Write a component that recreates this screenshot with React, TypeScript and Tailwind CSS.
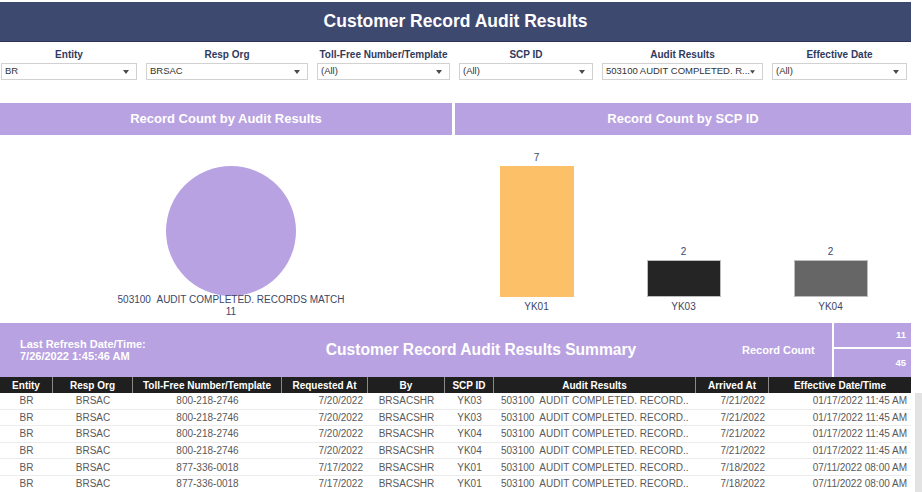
import React from 'react';

interface Filter {
  label: string;
  value: string;
  width: string;
}

interface Row {
  entity: string;
  respOrg: string;
  number: string;
  requestedAt: string;
  by: string;
  scpId: string;
  result: string;
  arrivedAt: string;
  effective: string;
}

const filters: Filter[] = [
  { label: 'Entity', value: 'BR', width: 'w-[136px]' },
  { label: 'Resp Org', value: 'BRSAC', width: 'w-[162px]' },
  { label: 'Toll-Free Number/Template', value: '(All)', width: 'w-[133px]' },
  { label: 'SCP ID', value: '(All)', width: 'w-[134px]' },
  { label: 'Audit Results', value: '503100 AUDIT COMPLETED. R...', width: 'w-[161px]' },
  { label: 'Effective Date', value: '(All)', width: 'w-[135px]' },
];

const rows: Row[] = [
  { entity: 'BR', respOrg: 'BRSAC', number: '800-218-2746', requestedAt: '7/20/2022', by: 'BRSACSHR', scpId: 'YK03', result: '503100  AUDIT COMPLETED. RECORD..', arrivedAt: '7/21/2022', effective: '01/17/2022 11:45 AM' },
  { entity: 'BR', respOrg: 'BRSAC', number: '800-218-2746', requestedAt: '7/20/2022', by: 'BRSACSHR', scpId: 'YK03', result: '503100  AUDIT COMPLETED. RECORD..', arrivedAt: '7/21/2022', effective: '01/17/2022 11:45 AM' },
  { entity: 'BR', respOrg: 'BRSAC', number: '800-218-2746', requestedAt: '7/20/2022', by: 'BRSACSHR', scpId: 'YK04', result: '503100  AUDIT COMPLETED. RECORD..', arrivedAt: '7/21/2022', effective: '01/17/2022 11:45 AM' },
  { entity: 'BR', respOrg: 'BRSAC', number: '800-218-2746', requestedAt: '7/20/2022', by: 'BRSACSHR', scpId: 'YK04', result: '503100  AUDIT COMPLETED. RECORD..', arrivedAt: '7/21/2022', effective: '01/17/2022 11:45 AM' },
  { entity: 'BR', respOrg: 'BRSAC', number: '877-336-0018', requestedAt: '7/17/2022', by: 'BRSACSHR', scpId: 'YK01', result: '503100  AUDIT COMPLETED. RECORD..', arrivedAt: '7/18/2022', effective: '07/11/2022 08:00 AM' },
  { entity: 'BR', respOrg: 'BRSAC', number: '877-336-0018', requestedAt: '7/17/2022', by: 'BRSACSHR', scpId: 'YK01', result: '503100  AUDIT COMPLETED. RECORD..', arrivedAt: '7/18/2022', effective: '07/11/2022 08:00 AM' },
];

const bars = [
  { id: 'YK01', count: 7, color: 'bg-[#fcc168]', height: 'h-[131px]', border: 'border-[#fcc168]' },
  { id: 'YK03', count: 2, color: 'bg-[#252525]', height: 'h-[37px]', border: 'border-[#bdbdbd]' },
  { id: 'YK04', count: 2, color: 'bg-[#666666]', height: 'h-[37px]', border: 'border-[#bdbdbd]' },
];

// column widths / alignment, shared by header and rows
const cols = [
  { title: 'Entity', w: 'w-[53px]', align: 'justify-center' },
  { title: 'Resp Org', w: 'w-[80px]', align: 'justify-center' },
  { title: 'Toll-Free Number/Template', w: 'w-[149px]', align: 'justify-center' },
  { title: 'Requested At', w: 'w-[86px]', align: 'justify-end pr-[5px]' },
  { title: 'By', w: 'w-[77px]', align: 'justify-center' },
  { title: 'SCP ID', w: 'w-[49px]', align: 'justify-center' },
  { title: 'Audit Results', w: 'w-[202px]', align: 'justify-start pl-[7px]' },
  { title: 'Arrived At', w: 'w-[73px]', align: 'justify-end pr-[4px]' },
  { title: 'Effective Date/Time', w: 'w-[142px]', align: 'justify-end pr-[4px]' },
];

const Dropdown: React.FC<{ value: string }> = ({ value }) => (
  <div className="flex items-center justify-between h-[17px] border border-[#d2d2d2] bg-white pl-[3px] pr-[7px]">
    <span className="text-[9.5px] text-[#333] whitespace-nowrap">{value}</span>
    <svg width="6" height="4" viewBox="0 0 6 4">
      <path d="M0 0 L6 0 L3 4 Z" fill="#4a4a4a" />
    </svg>
  </div>
);

export default function App() {
  return (
    <div
      className="w-[922px] h-[492px] overflow-hidden bg-white pt-[2px]"
      style={{ fontFamily: '"Liberation Sans", Arial, sans-serif' }}
    >
      {/* title bar */}
      <div className="w-[911px] h-[40px] bg-[#3e4970] border-b border-[#2c3558] flex items-center justify-center">
        <h1 className="text-[17.5px] font-bold text-white">Customer Record Audit Results</h1>
      </div>

      {/* filters */}
      <div className="flex gap-[9px] pl-[1px] mt-[6px]">
        {filters.map((f) => (
          <div key={f.label} className={`${f.width} flex flex-col`}>
            <div className="h-[13px] leading-[13px] text-center text-[10px] font-bold text-[#2f3a5e]">
              {f.label}
            </div>
            <div className="mt-[2px]">
              <Dropdown value={f.value} />
            </div>
          </div>
        ))}
      </div>

      {/* chart headers */}
      <div className="flex w-[911px] mt-[23px] gap-[3px]">
        <div className="w-[452px] h-[32px] bg-[#b8a2e1] flex items-center justify-center text-white font-bold text-[13px]">
          Record Count by Audit Results
        </div>
        <div className="flex-1 h-[32px] bg-[#b8a2e1] flex items-center justify-center text-white font-bold text-[13px]">
          Record Count by SCP ID
        </div>
      </div>

      {/* charts */}
      <div className="flex w-[911px] h-[188px]">
        <div className="w-[452px] flex flex-col items-center pl-[10px] pt-[31px]">
          <div className="w-[130px] h-[130px] rounded-full bg-[#b8a2e1]" />
          <div className="-mt-[2px] text-center text-[10px] leading-[12px] text-[#3b4668]">
            <div>503100&nbsp;&nbsp;AUDIT COMPLETED. RECORDS MATCH</div>
            <div>11</div>
          </div>
        </div>
        <div className="flex-1 flex pl-[8px] pb-[10px] ml-[3px]">
          {bars.map((b) => (
            <div key={b.id} className="w-[147px] flex flex-col items-center justify-end">
              <div className="h-[12px] leading-[12px] text-[10px] text-[#3b4668] mb-[2px]">{b.count}</div>
              <div className={`w-[74px] ${b.height} ${b.color} border ${b.border}`} />
              <div className="h-[12px] leading-[12px] text-[10px] text-[#3b4668] mt-[4px]">{b.id}</div>
            </div>
          ))}
        </div>
      </div>

      {/* summary band */}
      <div className="flex w-[911px] h-[54px] bg-[#b8a2e1] text-white font-bold">
        <div className="w-[300px] pl-[20px] flex flex-col justify-center text-[11px] leading-[12px]">
          <div>Last Refresh Date/Time:</div>
          <div>7/26/2022 1:45:46 AM</div>
        </div>
        <div className="w-[362px] flex items-center justify-center text-[15.6px]">
          Customer Record Audit Results Summary
        </div>
        <div className="w-[170px] pl-[80px] flex items-center text-[11px]">Record Count</div>
        <div className="flex-1 border-l-2 border-white flex flex-col text-[9.5px]">
          <div className="h-[26px] flex items-center justify-end pr-[5px] border-b-2 border-white">11</div>
          <div className="flex-1 flex items-center justify-end pr-[5px]">45</div>
        </div>
      </div>

      {/* table */}
      <div className="flex">
        <div className="w-[911px]">
          <div className="flex h-[16px] bg-[#1f1f1f] text-white font-bold text-[10px]">
            {cols.map((c, i) => (
              <div
                key={c.title}
                className={`${c.w} flex items-center justify-center ${i < cols.length - 1 ? 'border-r border-[#8a8a8a]' : ''}`}
              >
                {c.title}
              </div>
            ))}
          </div>
          {rows.map((r, idx) => {
            const cells = [r.entity, r.respOrg, r.number, r.requestedAt, r.by, r.scpId, r.result, r.arrivedAt, r.effective];
            return (
              <div key={idx} className="flex h-[16.6px] border-b border-[#ececec] text-[10px] text-[#595959]">
                {cells.map((v, i) => (
                  <div key={i} className={`${cols[i].w} flex items-center ${cols[i].align} whitespace-pre`}>
                    {v}
                  </div>
                ))}
              </div>
            );
          })}
        </div>
        <div className="ml-[4px] mt-[16px] w-[7px] h-[110px] bg-[#e3e3e3]" />
      </div>
    </div>
  );
}
